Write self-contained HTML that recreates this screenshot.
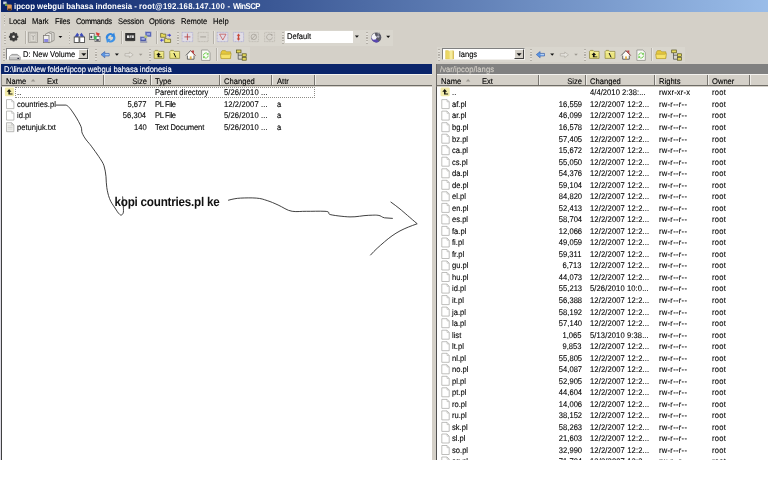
<!DOCTYPE html>
<html lang="id">
<head>
<meta charset="utf-8">
<title>ipcop webgui bahasa indonesia - WinSCP</title>
<style>
html,body{margin:0;padding:0;background:#fff;}
body{width:768px;height:477px;overflow:hidden;position:relative;font-family:"Liberation Sans",sans-serif;}
#app{filter:blur(.3px);position:absolute;left:0;top:0;width:768px;height:460px;overflow:hidden;background:#d4d0c8;}
#app div,#app svg{position:absolute;}
.t{position:absolute;white-space:pre;text-rendering:geometricPrecision;-webkit-text-stroke:.1px;}
#title{left:1px;top:0;width:767px;height:11.6px;background:linear-gradient(90deg,#0a246a 0%,#0a246a 2%,#a0c3ee 104%);}
.lb{left:0;top:0;width:1px;height:460px;background:#dcdae4;}
.pathL{left:1px;top:64px;width:430.7px;height:10.3px;background:#0a246a;}
.pathR{left:435.8px;top:64px;width:333px;height:10.3px;background:#808080;}
.paneL{left:1.1px;top:86.6px;width:430.5px;height:374px;background:#fff;border-left:1.1px solid #404040;box-sizing:border-box;}
.paneR{left:435.8px;top:86.6px;width:333px;height:374px;background:#fff;border-left:1.2px solid #505050;box-sizing:border-box;}
.hdr{height:12.4px;top:74.1px;background:#d4d0c8;border-bottom:1.1px solid #6e6c66;border-top:.8px solid #f4f2ee;box-sizing:border-box;}
.hs{top:75px;width:1px;height:10.4px;background:#77746e;box-shadow:.9px 0 0 #f2f0ec;}
.split{left:431.7px;top:63px;width:4.1px;height:400px;background:#d4d0c8;}
.combo{background:#fff;box-sizing:border-box;border:1px solid #808080;border-right-color:#f0eeea;border-bottom-color:#f0eeea;}
.cbtn{background:#d4d0c8;box-sizing:border-box;border:.8px solid #fff;border-right-color:#404040;border-bottom-color:#404040;}
.grip{width:1.6px;background:repeating-linear-gradient(180deg,#b4b0a8 0,#b4b0a8 .8px,#e2dfd9 .8px,#e2dfd9 1.6px);}
.sep{width:.9px;background:#b6b2aa;box-shadow:.8px 0 0 #eceae5;}
.band{background:#d9d6ce;}
.focus{left:15.4px;top:87.3px;width:299.2px;height:11.2px;box-sizing:border-box;border:1px dotted #8e8c86;}
</style>
</head>
<body>
<div id="app">
<div class="lb"></div>
<div id="title"></div>

<!-- toolbar bands -->
<div class="band" style="left:2px;top:29.6px;width:390.5px;height:16.4px"></div>
<div class="band" style="left:2px;top:46.8px;width:248px;height:15.6px"></div>
<div class="band" style="left:437px;top:46.8px;width:248px;height:15.6px"></div>

<!-- grips and separators: toolbar 1 -->
<div class="grip" style="left:3.6px;top:14.6px;height:11.5px"></div>
<div class="grip" style="left:4px;top:32px;height:11.5px"></div>
<div class="sep" style="left:24.6px;top:31.4px;height:12.6px"></div>
<div class="grip" style="left:68.6px;top:32px;height:11.5px"></div>
<div class="sep" style="left:120.8px;top:31.4px;height:12.6px"></div>
<div class="sep" style="left:156.2px;top:31.4px;height:12.6px"></div>
<div class="grip" style="left:177.4px;top:32px;height:11.5px"></div>
<div class="sep" style="left:213.2px;top:31.4px;height:12.6px"></div>
<div class="grip" style="left:282.4px;top:32px;height:11.5px"></div>
<div class="grip" style="left:366.4px;top:32px;height:11.5px"></div>
<!-- toolbar 2 left -->
<div class="grip" style="left:3.2px;top:49px;height:11.5px"></div>
<div class="grip" style="left:95.4px;top:49px;height:11.5px"></div>
<div class="grip" style="left:149.2px;top:49px;height:11.5px"></div>
<div class="sep" style="left:216.2px;top:48.4px;height:12.6px"></div>
<!-- toolbar 2 right -->
<div class="grip" style="left:438.4px;top:49px;height:11.5px"></div>
<div class="grip" style="left:530.2px;top:49px;height:11.5px"></div>
<div class="grip" style="left:584.2px;top:49px;height:11.5px"></div>
<div class="sep" style="left:651px;top:48.4px;height:12.6px"></div>

<!-- combos -->
<div class="combo" style="left:6.4px;top:48.4px;width:82.8px;height:12px"></div>
<div class="cbtn" style="left:78.4px;top:49.4px;width:9.8px;height:10px"></div>
<div class="combo" style="left:441.6px;top:48.2px;width:83px;height:12.2px"></div>
<div class="cbtn" style="left:513.8px;top:49.2px;width:9.8px;height:10.2px"></div>
<div style="left:285.2px;top:31px;width:68px;height:11.8px;background:#fff"></div>
<div style="left:353.2px;top:31px;width:7.2px;height:11.8px;background:#dbd8d1"></div>

<!-- panes -->
<div class="pathL"></div>
<div class="pathR"></div>
<div class="hdr" style="left:1px;width:430.7px"></div>
<div class="hdr" style="left:435.8px;width:333px"></div>
<div class="paneL"></div>
<div class="paneR"></div>
<div class="split"></div>
<div style="left:435.8px;top:63.8px;width:1.2px;height:23px;background:#6c6a66"></div>
<div style="left:1.1px;top:74.3px;width:1px;height:13px;background:#8a8882"></div>
<!-- header separators -->
<div class="hs" style="left:102.6px"></div>
<div class="hs" style="left:149.6px"></div>
<div class="hs" style="left:218.8px"></div>
<div class="hs" style="left:271.2px"></div>
<div class="hs" style="left:314px"></div>
<div class="hs" style="left:538.2px"></div>
<div class="hs" style="left:584.6px"></div>
<div class="hs" style="left:654.2px"></div>
<div class="hs" style="left:707.4px"></div>
<div class="hs" style="left:749px"></div>
<div class="focus"></div>

<svg style="left:0;top:0" width="768" height="459.5" viewBox="0 0 768 459.5" fill="none">
<g><rect x="3.2" y="1.6" width="3.4" height="2.6" fill="#c8d0d8"/><rect x="5" y="3.6" width="2.6" height="2.4" fill="#6a9a4a"/><rect x="7.2" y="4.6" width="4.6" height="5.6" rx=".8" fill="#e09a5a"/><rect x="7.8" y="8.6" width="3.6" height="2" fill="#4a3020"/></g>
<g transform="translate(13.6 36.8)"><circle r="2.8" stroke="#3c3c3c" stroke-width="2.2"/><g stroke="#3c3c3c" stroke-width="1.9"><path d="M0-4.7V4.7M-4.7 0H4.7M-3.3-3.3L3.3 3.3M-3.3 3.3L3.3-3.3"/></g><circle r="1.3" fill="#e4e2dc"/></g>
<rect x="28.6" y="32.2" width="8.8" height="10.2" fill="#dad7d0" stroke="#a09d96" stroke-width=".8"/><rect x="30" y="33.2" width="6" height="8.2" stroke="#b4b1aa" stroke-width=".6"/><path d="M31.8 35.2l1.4 1.8 1.4-1.8M33.2 37v3" stroke="#9a9892" stroke-width=".7"/>
<path d="M47.5 33l3-1.2 3.6 1v7.6l-3 1.4z" fill="#e4e2dc" stroke="#8a8882" stroke-width=".8"/><path d="M45.4 34l3-1.2 3.4 1v7.8l-3 1.3z" fill="#eceae6" stroke="#86847e" stroke-width=".8"/><rect x="43.4" y="35.4" width="5.6" height="7.2" fill="#f2f0ee" stroke="#7c7a76" stroke-width=".8"/><rect x="44.2" y="39" width="4" height="3" fill="#8a86e0"/>
<path d="M58.50 35.95h3.80l-1.90 2.10z" fill="#111"/>
<path d="M74.600 36.800l2.600-4 2.200 2.400 2.200-2.400 2.600 4z" fill="#3c4cba"/><path d="M77.800 36.600l1.600-1.800 1.600 1.800z" fill="#e6eaf6"/><rect x="74.200" y="37" width="4.800" height="5.400" fill="#fff" stroke="#3a3a3a" stroke-width=".8"/><rect x="79.800" y="37" width="4.800" height="5.400" fill="#fff" stroke="#3a3a3a" stroke-width=".8"/>
<rect x="89.4" y="33.6" width="4.8" height="6" fill="#f4f4f4" stroke="#666" stroke-width=".8"/><rect x="95" y="36.4" width="5" height="5.2" fill="#f4f4f4" stroke="#666" stroke-width=".8"/><rect x="90.4" y="35.8" width="1.8" height="2.4" fill="#445"/><rect x="96.2" y="39" width="2.6" height="2" fill="#556"/><path d="M93.6 35.6l3.2 1.2-.4 3-2.2-.6z" fill="#3cba5a"/><path d="M95.8 32.2l4 1.4-1.2 2.6-2-1.2z" fill="#dc3a34"/>
<g transform="translate(110.6 37.8)"><path d="M-4.6 1.2A4.6 4.6 0 0 1 2.4-3.9L3.6-5.2 4.6-.6 0-1.2 1.2-2.6A2.8 2.8 0 0 0-2.4.8z" fill="#2f86e0"/><path d="M4.6-1.2A4.6 4.6 0 0 1-2.4 3.9L-3.6 5.2-4.6.6 0 1.2-1.2 2.6A2.8 2.8 0 0 0 2.4-.8z" fill="#3f92e6"/></g>
<rect x="125.2" y="33" width="10" height="7.9" fill="#343434"/><rect x="127" y="35.4" width="2.4" height="2.6" fill="#e8e8e8"/><rect x="130" y="35.2" width="1" height="3" fill="#d0d0d0" transform="rotate(20 130.5 36.7)"/><rect x="131.6" y="35.4" width="2.2" height="2.6" fill="#dcdcdc"/><rect x="126" y="41.4" width="8" height=".6" fill="#b8b4ac"/>
<rect x="145.6" y="32" width="5.4" height="4.6" fill="#4858b0" stroke="#7880c0" stroke-width=".7"/><rect x="146.6" y="33" width="3.4" height="2.4" fill="#9aa6e0"/><rect x="140.4" y="37" width="5.6" height="4" fill="#3c4ca4" stroke="#7078b8" stroke-width=".7"/><rect x="141.4" y="37.8" width="3.4" height="2" fill="#aab4e6"/><rect x="140.2" y="41.4" width="7" height="1.3" fill="#8c90b0"/><path d="M143.6 37l2-2.2 2.2 1.8-2 2z" fill="#b8c47a"/>
<path d="M160.6 33.4h2l.6.7h2.6v3.2h-5.2z" fill="#e6da5c" stroke="#5e5a24" stroke-width=".7"/><path d="M164.6 38.4h2l.6.7h3.4v3.4h-6z" fill="#ece270" stroke="#5e5a24" stroke-width=".7"/><path d="M167.4 34.6h1.8v-1.2l2 1.8-2 1.8v-1.2h-1.8z" fill="#4444cc"/><path d="M163.6 39.6h-1.6v-1.2l-2 1.8 2 1.8v-1.2h1.6z" fill="#5050d0"/>
<rect x="182.1" y="32.4" width="10.6" height="9.2" fill="#e0dde6" stroke="#9c9cd0" stroke-width=".6" stroke-dasharray="1 .5"/><path d="M184.4 36.9h6M187.4 33.6v6.6" stroke="#b83c3c" stroke-width=".8"/>
<rect x="198.1" y="32.4" width="10" height="9.2" fill="#d8d5ce" stroke="#b4b0a8" stroke-width=".7" stroke-dasharray="1 .6"/><path d="M200.2 36.9h5.8" stroke="#aaa69e" stroke-width="1.1"/>
<rect x="217.2" y="32.4" width="10.6" height="9.2" fill="#e0dde6" stroke="#9c9cd0" stroke-width=".6" stroke-dasharray="1 .5"/><path d="M219.6 34.2h6.4l-3.2 5.8z" stroke="#c04848" stroke-width=".7"/>
<rect x="233.4" y="32.4" width="10.2" height="9.2" fill="#e0dde6" stroke="#9c9cd0" stroke-width=".6" stroke-dasharray="1 .5"/><path d="M238.5 33.4l1.8 2.4h-1.1v2.6h1.1l-1.8 2.4-1.8-2.4h1.1v-2.6h-1.1z" fill="#c84838"/>
<rect x="249.1" y="32.4" width="9.4" height="9.2" fill="#d8d5ce" stroke="#b8b4ac" stroke-width=".7" stroke-dasharray="1 .6"/><circle cx="253.8" cy="36.9" r="2.7" stroke="#a09c94" stroke-width=".7"/><path d="M251.6 39.4l4.4-5" stroke="#a09c94" stroke-width=".7"/>
<rect x="264.6" y="32.4" width="10" height="9.2" fill="#d8d5ce" stroke="#b8b4ac" stroke-width=".7" stroke-dasharray="1 .6"/><path d="M271.6 35a2.9 2.9 0 1 0 .8 2.4" stroke="#a09c94" stroke-width=".7"/><path d="M270.2 34.2h2.2v2z" fill="#a09c94"/>
<path d="M354.90 35.50h4.00l-2.00 2.20z" fill="#111"/>
<circle cx="376.3" cy="37.4" r="5" fill="#5a5a66"/><path d="M371.6 36.2a5 5 0 0 0 7.6 5.4c-2.2-2-4.2-4-7.6-5.4z" fill="#5846b0"/><path d="M371.4 37.6c.2-2.4 1.6-4 3.4-4.4l.6 2.6 1.6 1.2-1.4 2.4-2.6.4z" fill="#f4f4f8"/><path d="M377 33.400l3-1-1.600 3z" fill="#8a8a94"/><circle cx="378.200" cy="36.600" r="1.200" fill="#b4b4c4"/>
<path d="M386.20 35.70h4.00l-2.00 2.20z" fill="#111"/>
<g transform="translate(0.0 0)"><path d="M9.400 59.800v-3l2.400-2.400h5.400l3 2.400v3z" fill="#c6c6c6" stroke="#808080" stroke-width=".7"/><path d="M9.800 56.600h10" stroke="#f4f4f4" stroke-width=".7"/><rect x="17.400" y="57.800" width="1.600" height="1.200" fill="#334"/><path d="M101 54.600l3.800-3v1.800h4.400v2.600h-4.400v1.800z" fill="#5a96e4" stroke="#3a5ca4" stroke-width=".6"/><rect x="105.2" y="54" width="3.600" height="1.300" fill="#b4d0f4"/><path d="M114.900 53.600h4l-2 2.200z" fill="#111"/><path d="M133.200 54.800l-3.800-2.800v1.600h-4.400v2.400h4.400v1.600z" fill="#e4e2dc" stroke="#b0aca4" stroke-width=".7"/><path d="M138.900 53.700h3.600l-1.800 2z" fill="#9c9890"/><path d="M154.200 51.400l1-1h2.600l1 1h5v7h-9.600z" fill="#ece680" stroke="#807a30" stroke-width=".65"/><path d="M154.600 52.400h8.800" stroke="#f8f4b0" stroke-width=".6"/><path d="M158.600 52.600l2.200 2.400h-1.500v1.400h2.700v.9h-4.400v-2.300h-1.300z" fill="#111"/><path d="M169.800 51.400l1-1h2.600l1 1h5.200v7h-9.800z" fill="#ece680" stroke="#807a30" stroke-width=".65"/><path d="M170.200 52.400h9" stroke="#f8f4b0" stroke-width=".6"/><path d="M173.800 53l2 4.400" stroke="#111" stroke-width="1"/><path d="M187.400 55v4.200h6.600v-4.200" fill="#fbfbf6" stroke="#444" stroke-width=".8"/><path d="M186 55.400l4.600-4.800 4.600 4.800" fill="#fbfbf6" stroke="#444" stroke-width=".9"/><path d="M192 50.400h2v3.200l-2-2z" fill="#c04444"/><path d="M190.600 50.600l4.600 4.800" stroke="#b04848" stroke-width="1"/><rect x="189.800" y="56.400" width="1.800" height="2.800" fill="#e0b048"/><path d="M201.600 50h5.800l2.600 2.400v8h-8.400z" fill="#fafaf6" stroke="#8e8e88" stroke-width=".8"/><path d="M203.400 55.400a2.500 2.500 0 0 1 4.400-1.600M208.200 55.600a2.500 2.500 0 0 1-4.400 1.600" stroke="#6ccc4c" stroke-width=".9"/><path d="M208.600 52.600v2.200h-2.200zM203 58.400v-2.200h2.200z" fill="#6ccc4c"/><path d="M221 52.200l1.200-1.600h3.200l1 1.200h4.200v6.600h-9.600z" fill="#e6c83c" stroke="#a8922c" stroke-width=".6"/><path d="M220.400 54.200h9l1.800-.6-1 5h-9z" fill="#f6e268" stroke="#b49a30" stroke-width=".6"/><path d="M238.200 53v6.200h3.800M238.200 55.200h3.800" stroke="#444" stroke-width=".7"/><rect x="236.400" y="50" width="4.600" height="2.800" fill="#e4d85c" stroke="#55521e" stroke-width=".7"/><rect x="242.200" y="53.800" width="4" height="2.600" fill="#e4d85c" stroke="#55521e" stroke-width=".7"/><rect x="242.200" y="57.600" width="4" height="2.600" fill="#e4d85c" stroke="#55521e" stroke-width=".7"/><path d="M81.300 53.300h5l-2.500 2.600z" fill="#111"/></g>
<g transform="translate(435.3 0)"><path d="M101 54.600l3.800-3v1.800h4.400v2.600h-4.400v1.800z" fill="#5a96e4" stroke="#3a5ca4" stroke-width=".6"/><rect x="105.2" y="54" width="3.600" height="1.300" fill="#b4d0f4"/><path d="M114.900 53.600h4l-2 2.200z" fill="#111"/><path d="M133.200 54.800l-3.800-2.800v1.600h-4.400v2.400h4.400v1.600z" fill="#e4e2dc" stroke="#b0aca4" stroke-width=".7"/><path d="M138.900 53.700h3.600l-1.800 2z" fill="#9c9890"/><path d="M154.200 51.400l1-1h2.600l1 1h5v7h-9.600z" fill="#ece680" stroke="#807a30" stroke-width=".65"/><path d="M154.600 52.400h8.800" stroke="#f8f4b0" stroke-width=".6"/><path d="M158.600 52.600l2.200 2.400h-1.500v1.400h2.700v.9h-4.400v-2.300h-1.300z" fill="#111"/><path d="M169.800 51.400l1-1h2.600l1 1h5.200v7h-9.800z" fill="#ece680" stroke="#807a30" stroke-width=".65"/><path d="M170.200 52.400h9" stroke="#f8f4b0" stroke-width=".6"/><path d="M173.800 53l2 4.400" stroke="#111" stroke-width="1"/><path d="M187.400 55v4.200h6.600v-4.200" fill="#fbfbf6" stroke="#444" stroke-width=".8"/><path d="M186 55.400l4.600-4.800 4.600 4.800" fill="#fbfbf6" stroke="#444" stroke-width=".9"/><path d="M192 50.400h2v3.200l-2-2z" fill="#c04444"/><path d="M190.600 50.600l4.600 4.800" stroke="#b04848" stroke-width="1"/><rect x="189.800" y="56.400" width="1.800" height="2.800" fill="#e0b048"/><path d="M201.600 50h5.800l2.600 2.400v8h-8.400z" fill="#fafaf6" stroke="#8e8e88" stroke-width=".8"/><path d="M203.400 55.400a2.500 2.500 0 0 1 4.400-1.600M208.200 55.600a2.500 2.500 0 0 1-4.400 1.600" stroke="#6ccc4c" stroke-width=".9"/><path d="M208.600 52.600v2.200h-2.200zM203 58.400v-2.200h2.200z" fill="#6ccc4c"/><path d="M221 52.200l1.200-1.600h3.200l1 1.200h4.200v6.600h-9.600z" fill="#e6c83c" stroke="#a8922c" stroke-width=".6"/><path d="M220.400 54.200h9l1.800-.6-1 5h-9z" fill="#f6e268" stroke="#b49a30" stroke-width=".6"/><path d="M238.200 53v6.200h3.800M238.200 55.200h3.800" stroke="#444" stroke-width=".7"/><rect x="236.400" y="50" width="4.600" height="2.800" fill="#e4d85c" stroke="#55521e" stroke-width=".7"/><rect x="242.200" y="53.800" width="4" height="2.600" fill="#e4d85c" stroke="#55521e" stroke-width=".7"/><rect x="242.200" y="57.600" width="4" height="2.600" fill="#e4d85c" stroke="#55521e" stroke-width=".7"/><path d="M81.300 53.300h5l-2.500 2.600z" fill="#111"/></g>
<path d="M445.600 50.600h2.600l.8.800h4.400v7.600h-7.800z" fill="#ecd866" stroke="#d8c050" stroke-width=".5"/><path d="M449.600 50.400l3.600-.2v8.800h-3.600z" fill="#f6ec9c"/><path d="M453.200 50.600v8.400" stroke="#c8a838" stroke-width=".8"/>
<path d="M30.900 81.500l2.200-2.600 2.200 2.600z" fill="#99968f"/><path d="M465.900 81.500l2.200-2.600 2.200 2.600z" fill="#99968f"/>
<g transform="translate(4.9 87.6)"><rect x="0" y="0" width="9.200" height="8.600" rx="1.200" fill="#f3ecaa"/><path d="M4.200 1.400l2.400 2.800h-1.600v1.600h2.600v1.100h-4.100v-2.700h-1.700z" fill="#1a1a10"/></g>
<g transform="translate(6.1 99.2)"><path d="M.4.400h5.200l2.200 2.200v6.800h-7.400z" fill="#fff" stroke="#a4a4a0" stroke-width=".7"/><path d="M5.600.4v2.200h2.200" stroke="#a4a4a0" stroke-width=".5"/></g>
<g transform="translate(6.1 110.7)"><path d="M.4.400h5.200l2.200 2.200v6.800h-7.400z" fill="#fff" stroke="#a4a4a0" stroke-width=".7"/><path d="M5.600.4v2.200h2.200" stroke="#a4a4a0" stroke-width=".5"/></g>
<g transform="translate(6.1 122.3)"><path d="M.4.400h5.200l2.200 2.200v6.800h-7.400z" fill="#f1f1ef" stroke="#a4a4a0" stroke-width=".7"/><path d="M5.600.4v2.200h2.200" stroke="#a4a4a0" stroke-width=".5"/><path d="M1.600 3.600h4.800M1.600 5.200h4.800M1.600 6.800h4.800" stroke="#c4c4c0" stroke-width=".6"/></g>
<g transform="translate(440.5 87.6)"><rect x="0" y="0" width="9.200" height="8.600" rx="1.200" fill="#f3ecaa"/><path d="M4.200 1.400l2.400 2.800h-1.600v1.600h2.600v1.100h-4.100v-2.700h-1.700z" fill="#1a1a10"/></g>
<g transform="translate(441.4 99.2)"><path d="M.4.400h5.200l2.200 2.200v6.800h-7.400z" fill="#fff" stroke="#a4a4a0" stroke-width=".7"/><path d="M5.600.4v2.200h2.200" stroke="#a4a4a0" stroke-width=".5"/></g>
<g transform="translate(441.4 110.7)"><path d="M.4.400h5.200l2.200 2.200v6.800h-7.400z" fill="#fff" stroke="#a4a4a0" stroke-width=".7"/><path d="M5.600.4v2.200h2.200" stroke="#a4a4a0" stroke-width=".5"/></g>
<g transform="translate(441.4 122.3)"><path d="M.4.400h5.200l2.200 2.200v6.800h-7.400z" fill="#fff" stroke="#a4a4a0" stroke-width=".7"/><path d="M5.600.4v2.200h2.200" stroke="#a4a4a0" stroke-width=".5"/></g>
<g transform="translate(441.4 133.8)"><path d="M.4.400h5.200l2.200 2.200v6.800h-7.400z" fill="#fff" stroke="#a4a4a0" stroke-width=".7"/><path d="M5.600.4v2.200h2.200" stroke="#a4a4a0" stroke-width=".5"/></g>
<g transform="translate(441.4 145.3)"><path d="M.4.400h5.200l2.200 2.200v6.800h-7.400z" fill="#fff" stroke="#a4a4a0" stroke-width=".7"/><path d="M5.600.4v2.200h2.200" stroke="#a4a4a0" stroke-width=".5"/></g>
<g transform="translate(441.4 156.8)"><path d="M.4.400h5.200l2.200 2.200v6.800h-7.400z" fill="#fff" stroke="#a4a4a0" stroke-width=".7"/><path d="M5.600.4v2.200h2.200" stroke="#a4a4a0" stroke-width=".5"/></g>
<g transform="translate(441.4 168.4)"><path d="M.4.400h5.200l2.200 2.200v6.800h-7.400z" fill="#fff" stroke="#a4a4a0" stroke-width=".7"/><path d="M5.600.4v2.200h2.200" stroke="#a4a4a0" stroke-width=".5"/></g>
<g transform="translate(441.4 179.9)"><path d="M.4.400h5.200l2.200 2.200v6.800h-7.400z" fill="#fff" stroke="#a4a4a0" stroke-width=".7"/><path d="M5.600.4v2.200h2.200" stroke="#a4a4a0" stroke-width=".5"/></g>
<g transform="translate(441.4 191.4)"><path d="M.4.400h5.200l2.200 2.200v6.800h-7.400z" fill="#fff" stroke="#a4a4a0" stroke-width=".7"/><path d="M5.600.4v2.200h2.200" stroke="#a4a4a0" stroke-width=".5"/></g>
<g transform="translate(441.4 203.0)"><path d="M.4.400h5.200l2.200 2.200v6.800h-7.400z" fill="#fff" stroke="#a4a4a0" stroke-width=".7"/><path d="M5.600.4v2.200h2.200" stroke="#a4a4a0" stroke-width=".5"/></g>
<g transform="translate(441.4 214.5)"><path d="M.4.400h5.200l2.200 2.200v6.800h-7.400z" fill="#fff" stroke="#a4a4a0" stroke-width=".7"/><path d="M5.600.4v2.200h2.200" stroke="#a4a4a0" stroke-width=".5"/></g>
<g transform="translate(441.4 226.0)"><path d="M.4.400h5.200l2.200 2.200v6.800h-7.400z" fill="#fff" stroke="#a4a4a0" stroke-width=".7"/><path d="M5.600.4v2.200h2.200" stroke="#a4a4a0" stroke-width=".5"/></g>
<g transform="translate(441.4 237.6)"><path d="M.4.400h5.200l2.200 2.200v6.800h-7.400z" fill="#fff" stroke="#a4a4a0" stroke-width=".7"/><path d="M5.600.4v2.200h2.200" stroke="#a4a4a0" stroke-width=".5"/></g>
<g transform="translate(441.4 249.1)"><path d="M.4.400h5.200l2.200 2.200v6.800h-7.400z" fill="#fff" stroke="#a4a4a0" stroke-width=".7"/><path d="M5.600.4v2.200h2.200" stroke="#a4a4a0" stroke-width=".5"/></g>
<g transform="translate(441.4 260.6)"><path d="M.4.400h5.200l2.200 2.200v6.800h-7.400z" fill="#fff" stroke="#a4a4a0" stroke-width=".7"/><path d="M5.600.4v2.200h2.200" stroke="#a4a4a0" stroke-width=".5"/></g>
<g transform="translate(441.4 272.1)"><path d="M.4.400h5.200l2.200 2.200v6.800h-7.400z" fill="#fff" stroke="#a4a4a0" stroke-width=".7"/><path d="M5.600.4v2.200h2.200" stroke="#a4a4a0" stroke-width=".5"/></g>
<g transform="translate(441.4 283.7)"><path d="M.4.400h5.200l2.200 2.200v6.800h-7.400z" fill="#fff" stroke="#a4a4a0" stroke-width=".7"/><path d="M5.600.4v2.200h2.200" stroke="#a4a4a0" stroke-width=".5"/></g>
<g transform="translate(441.4 295.2)"><path d="M.4.400h5.200l2.200 2.200v6.800h-7.400z" fill="#fff" stroke="#a4a4a0" stroke-width=".7"/><path d="M5.600.4v2.200h2.200" stroke="#a4a4a0" stroke-width=".5"/></g>
<g transform="translate(441.4 306.7)"><path d="M.4.400h5.200l2.200 2.200v6.800h-7.400z" fill="#fff" stroke="#a4a4a0" stroke-width=".7"/><path d="M5.600.4v2.200h2.200" stroke="#a4a4a0" stroke-width=".5"/></g>
<g transform="translate(441.4 318.3)"><path d="M.4.400h5.200l2.200 2.200v6.800h-7.400z" fill="#fff" stroke="#a4a4a0" stroke-width=".7"/><path d="M5.600.4v2.200h2.200" stroke="#a4a4a0" stroke-width=".5"/></g>
<g transform="translate(441.4 329.8)"><path d="M.4.400h5.200l2.200 2.200v6.800h-7.400z" fill="#fff" stroke="#a4a4a0" stroke-width=".7"/><path d="M5.600.4v2.200h2.200" stroke="#a4a4a0" stroke-width=".5"/></g>
<g transform="translate(441.4 341.3)"><path d="M.4.400h5.200l2.200 2.200v6.800h-7.400z" fill="#fff" stroke="#a4a4a0" stroke-width=".7"/><path d="M5.600.4v2.200h2.200" stroke="#a4a4a0" stroke-width=".5"/></g>
<g transform="translate(441.4 352.9)"><path d="M.4.400h5.200l2.200 2.200v6.800h-7.400z" fill="#fff" stroke="#a4a4a0" stroke-width=".7"/><path d="M5.600.4v2.200h2.200" stroke="#a4a4a0" stroke-width=".5"/></g>
<g transform="translate(441.4 364.4)"><path d="M.4.400h5.200l2.200 2.200v6.800h-7.400z" fill="#fff" stroke="#a4a4a0" stroke-width=".7"/><path d="M5.600.4v2.200h2.200" stroke="#a4a4a0" stroke-width=".5"/></g>
<g transform="translate(441.4 375.9)"><path d="M.4.400h5.200l2.200 2.200v6.800h-7.400z" fill="#fff" stroke="#a4a4a0" stroke-width=".7"/><path d="M5.600.4v2.200h2.200" stroke="#a4a4a0" stroke-width=".5"/></g>
<g transform="translate(441.4 387.4)"><path d="M.4.400h5.200l2.200 2.200v6.800h-7.400z" fill="#fff" stroke="#a4a4a0" stroke-width=".7"/><path d="M5.600.4v2.200h2.200" stroke="#a4a4a0" stroke-width=".5"/></g>
<g transform="translate(441.4 399.0)"><path d="M.4.400h5.200l2.200 2.200v6.800h-7.400z" fill="#fff" stroke="#a4a4a0" stroke-width=".7"/><path d="M5.600.4v2.200h2.200" stroke="#a4a4a0" stroke-width=".5"/></g>
<g transform="translate(441.4 410.5)"><path d="M.4.400h5.200l2.200 2.200v6.800h-7.400z" fill="#fff" stroke="#a4a4a0" stroke-width=".7"/><path d="M5.600.4v2.200h2.200" stroke="#a4a4a0" stroke-width=".5"/></g>
<g transform="translate(441.4 422.0)"><path d="M.4.400h5.200l2.200 2.200v6.800h-7.400z" fill="#fff" stroke="#a4a4a0" stroke-width=".7"/><path d="M5.600.4v2.200h2.200" stroke="#a4a4a0" stroke-width=".5"/></g>
<g transform="translate(441.4 433.6)"><path d="M.4.400h5.200l2.200 2.200v6.800h-7.400z" fill="#fff" stroke="#a4a4a0" stroke-width=".7"/><path d="M5.600.4v2.200h2.200" stroke="#a4a4a0" stroke-width=".5"/></g>
<g transform="translate(441.4 445.1)"><path d="M.4.400h5.200l2.200 2.200v6.800h-7.400z" fill="#fff" stroke="#a4a4a0" stroke-width=".7"/><path d="M5.600.4v2.200h2.200" stroke="#a4a4a0" stroke-width=".5"/></g>
<g transform="translate(441.4 456.6)"><path d="M.4.400h5.200l2.200 2.200v6.800h-7.400z" fill="#fff" stroke="#a4a4a0" stroke-width=".7"/><path d="M5.600.4v2.200h2.200" stroke="#a4a4a0" stroke-width=".5"/></g>
<path d="M55.800 105.100H65.900C68 105.600 70 108 74 114S79.600 123.500 80.900 126.300 81.200 131 82.200 133.100 84 137 86.300 140 89.500 143.500 91.800 146.800 96.500 153 98.600 156.300 103 162.500 104 165.800 105.700 173 106 176.700 106.200 184 106.800 187.600 108 194.500 109.500 198.500 113 205 115 208 118 213 119.600 214.300 121 215.200 121.700 214.900 123.200 213.600 123.400 212.200 123.300 206 123.100 202.600L122.600 196.400" stroke="#2a2a2a" stroke-width=".9"/>
<path d="M228.100 200.300C232 199.200 236 198.300 240.600 198.100S251 197.700 256.300 198.100 263 199.300 267.200 200.600 273.500 203 278.100 205 287 210.600 292.200 211.300 301 211.200 306.300 211.300 319 211 325 211.300 327.500 213.600 329.700 214.400 343 216.700 350 216.900 362 215.500 368.800 215.300 375 215 378.100 215.300 381.500 217.200 384.400 217.800L392.800 218.400" stroke="#2a2a2a" stroke-width=".9"/>
<path d="M390.600 201.900C393.500 204 397 206.500 400 209S411 218.500 417.200 223.750C411 226 405.500 228 400 230.900S389.500 237.500 384.400 241.900 375 250 370.300 255.300" stroke="#2a2a2a" stroke-width=".9"/>
</svg>

<span class="t" style="top:1.08px;font-size:8.42px;line-height:11px;letter-spacing:0.036px;left:14.00px;transform-origin:0 50%;transform:scaleX(0.9259);font-weight:700;-webkit-text-stroke:0;color:#fff;">ipcop webgui bahasa indonesia - </span>
<span class="t" style="top:1.08px;font-size:8.42px;line-height:11px;letter-spacing:0.261px;left:139.40px;transform-origin:0 50%;transform:scaleX(0.9259);font-weight:700;-webkit-text-stroke:0;color:#fff;">root@192.168.147.100 - </span>
<span class="t" style="top:1.08px;font-size:8.42px;line-height:11px;letter-spacing:-0.588px;left:233.20px;transform-origin:0 50%;transform:scaleX(0.9259);font-weight:700;-webkit-text-stroke:0;color:#fff;">WinSCP</span>
<span class="t" style="top:15.66px;font-size:8.21px;line-height:11px;letter-spacing:-0.207px;left:8.70px;transform-origin:0 50%;transform:scaleX(0.9259);">Local</span>
<span class="t" style="top:15.66px;font-size:8.21px;line-height:11px;letter-spacing:-0.074px;left:31.90px;transform-origin:0 50%;transform:scaleX(0.9259);">Mark</span>
<span class="t" style="top:15.66px;font-size:8.21px;line-height:11px;letter-spacing:-0.226px;left:54.50px;transform-origin:0 50%;transform:scaleX(0.9259);">Files</span>
<span class="t" style="top:15.66px;font-size:8.21px;line-height:11px;letter-spacing:-0.436px;left:75.80px;transform-origin:0 50%;transform:scaleX(0.9259);">Commands</span>
<span class="t" style="top:15.66px;font-size:8.21px;line-height:11px;letter-spacing:-0.205px;left:117.50px;transform-origin:0 50%;transform:scaleX(0.9259);">Session</span>
<span class="t" style="top:15.66px;font-size:8.21px;line-height:11px;letter-spacing:-0.073px;left:149.00px;transform-origin:0 50%;transform:scaleX(0.9259);">Options</span>
<span class="t" style="top:15.66px;font-size:8.21px;line-height:11px;letter-spacing:-0.071px;left:180.50px;transform-origin:0 50%;transform:scaleX(0.9259);">Remote</span>
<span class="t" style="top:15.66px;font-size:8.21px;line-height:11px;letter-spacing:0.020px;left:212.50px;transform-origin:0 50%;transform:scaleX(0.9259);">Help</span>
<span class="t" style="top:49.46px;font-size:8.21px;line-height:11px;left:23.30px;transform-origin:0 50%;transform:scaleX(0.9259);">D: New Volume</span>
<span class="t" style="top:30.96px;font-size:8.21px;line-height:11px;left:286.50px;transform-origin:0 50%;transform:scaleX(0.9259);">Default</span>
<span class="t" style="top:49.46px;font-size:8.21px;line-height:11px;left:458.70px;transform-origin:0 50%;transform:scaleX(0.9259);">langs</span>
<span class="t" style="top:63.96px;font-size:8.21px;line-height:11px;letter-spacing:-0.095px;left:4.20px;transform-origin:0 50%;transform:scaleX(0.9259);color:#fff;">D:\linux\New folder\ipcop webgui bahasa indonesia</span>
<span class="t" style="top:63.96px;font-size:8.21px;line-height:11px;letter-spacing:0.055px;left:440.00px;transform-origin:0 50%;transform:scaleX(0.9259);color:#d4d0c8;">/var/ipcop/langs</span>
<span class="t" style="top:75.96px;font-size:8.21px;line-height:11px;left:5.50px;transform-origin:0 50%;transform:scaleX(0.9259);">Name</span>
<span class="t" style="top:75.96px;font-size:8.21px;line-height:11px;left:46.50px;transform-origin:0 50%;transform:scaleX(0.9259);">Ext</span>
<span class="t" style="top:75.96px;font-size:8.21px;line-height:11px;right:621.50px;transform-origin:100% 50%;transform:scaleX(0.9259);">Size</span>
<span class="t" style="top:75.96px;font-size:8.21px;line-height:11px;left:154.90px;transform-origin:0 50%;transform:scaleX(0.9259);">Type</span>
<span class="t" style="top:75.96px;font-size:8.21px;line-height:11px;left:223.50px;transform-origin:0 50%;transform:scaleX(0.9259);">Changed</span>
<span class="t" style="top:75.96px;font-size:8.21px;line-height:11px;left:276.70px;transform-origin:0 50%;transform:scaleX(0.9259);">Attr</span>
<span class="t" style="top:75.96px;font-size:8.21px;line-height:11px;left:441.30px;transform-origin:0 50%;transform:scaleX(0.9259);">Name</span>
<span class="t" style="top:75.96px;font-size:8.21px;line-height:11px;left:482.00px;transform-origin:0 50%;transform:scaleX(0.9259);">Ext</span>
<span class="t" style="top:75.96px;font-size:8.21px;line-height:11px;right:186.50px;transform-origin:100% 50%;transform:scaleX(0.9259);">Size</span>
<span class="t" style="top:75.96px;font-size:8.21px;line-height:11px;left:590.00px;transform-origin:0 50%;transform:scaleX(0.9259);">Changed</span>
<span class="t" style="top:75.96px;font-size:8.21px;line-height:11px;left:658.80px;transform-origin:0 50%;transform:scaleX(0.9259);">Rights</span>
<span class="t" style="top:75.96px;font-size:8.21px;line-height:11px;left:712.20px;transform-origin:0 50%;transform:scaleX(0.9259);">Owner</span>
<span class="t" style="top:87.43px;font-size:8.21px;line-height:11px;letter-spacing:0.197px;left:16.60px;transform-origin:0 50%;transform:scaleX(0.9259);">..</span>
<span class="t" style="top:87.43px;font-size:8.21px;line-height:11px;letter-spacing:-0.028px;left:154.90px;transform-origin:0 50%;transform:scaleX(0.9259);">Parent directory</span>
<span class="t" style="top:87.43px;font-size:8.21px;line-height:11px;letter-spacing:0.113px;left:223.50px;transform-origin:0 50%;transform:scaleX(0.9259);">5/26/2010 ...</span>
<span class="t" style="top:98.96px;font-size:8.21px;line-height:11px;left:16.60px;transform-origin:0 50%;transform:scaleX(0.9259);">countries.pl</span>
<span class="t" style="top:98.96px;font-size:8.21px;line-height:11px;right:621.50px;transform-origin:100% 50%;transform:scaleX(0.9259);">5,677</span>
<span class="t" style="top:98.96px;font-size:8.21px;line-height:11px;letter-spacing:-0.426px;left:154.90px;transform-origin:0 50%;transform:scaleX(0.9259);">PL File</span>
<span class="t" style="top:98.96px;font-size:8.21px;line-height:11px;letter-spacing:0.113px;left:223.50px;transform-origin:0 50%;transform:scaleX(0.9259);">12/2/2007 ...</span>
<span class="t" style="top:98.96px;font-size:8.21px;line-height:11px;left:276.70px;transform-origin:0 50%;transform:scaleX(0.9259);">a</span>
<span class="t" style="top:110.49px;font-size:8.21px;line-height:11px;left:16.60px;transform-origin:0 50%;transform:scaleX(0.9259);">id.pl</span>
<span class="t" style="top:110.49px;font-size:8.21px;line-height:11px;right:621.50px;transform-origin:100% 50%;transform:scaleX(0.9259);">56,304</span>
<span class="t" style="top:110.49px;font-size:8.21px;line-height:11px;letter-spacing:-0.426px;left:154.90px;transform-origin:0 50%;transform:scaleX(0.9259);">PL File</span>
<span class="t" style="top:110.49px;font-size:8.21px;line-height:11px;letter-spacing:0.113px;left:223.50px;transform-origin:0 50%;transform:scaleX(0.9259);">5/26/2010 ...</span>
<span class="t" style="top:110.49px;font-size:8.21px;line-height:11px;left:276.70px;transform-origin:0 50%;transform:scaleX(0.9259);">a</span>
<span class="t" style="top:122.02px;font-size:8.21px;line-height:11px;left:16.60px;transform-origin:0 50%;transform:scaleX(0.9259);">petunjuk.txt</span>
<span class="t" style="top:122.02px;font-size:8.21px;line-height:11px;right:621.50px;transform-origin:100% 50%;transform:scaleX(0.9259);">140</span>
<span class="t" style="top:122.02px;font-size:8.21px;line-height:11px;letter-spacing:-0.121px;left:154.90px;transform-origin:0 50%;transform:scaleX(0.9259);">Text Document</span>
<span class="t" style="top:122.02px;font-size:8.21px;line-height:11px;letter-spacing:0.113px;left:223.50px;transform-origin:0 50%;transform:scaleX(0.9259);">5/26/2010 ...</span>
<span class="t" style="top:122.02px;font-size:8.21px;line-height:11px;left:276.70px;transform-origin:0 50%;transform:scaleX(0.9259);">a</span>
<span class="t" style="top:87.43px;font-size:8.21px;line-height:11px;letter-spacing:0.197px;left:451.80px;transform-origin:0 50%;transform:scaleX(0.9259);">..</span>
<span class="t" style="top:87.43px;font-size:8.21px;line-height:11px;letter-spacing:0.045px;left:590.00px;transform-origin:0 50%;transform:scaleX(0.9259);">4/4/2010 2:38:...</span>
<span class="t" style="top:87.43px;font-size:8.21px;line-height:11px;letter-spacing:0.212px;left:658.60px;transform-origin:0 50%;transform:scaleX(0.9259);">rwxr-xr-x</span>
<span class="t" style="top:87.43px;font-size:8.21px;line-height:11px;letter-spacing:0.272px;left:712.20px;transform-origin:0 50%;transform:scaleX(0.9259);">root</span>
<span class="t" style="top:98.96px;font-size:8.21px;line-height:11px;left:451.80px;transform-origin:0 50%;transform:scaleX(0.9259);">af.pl</span>
<span class="t" style="top:98.96px;font-size:8.21px;line-height:11px;right:186.40px;transform-origin:100% 50%;transform:scaleX(0.9259);">16,559</span>
<span class="t" style="top:98.96px;font-size:8.21px;line-height:11px;letter-spacing:0.139px;left:590.00px;transform-origin:0 50%;transform:scaleX(0.9259);">12/2/2007 12:2...</span>
<span class="t" style="top:98.96px;font-size:8.21px;line-height:11px;letter-spacing:0.298px;left:658.60px;transform-origin:0 50%;transform:scaleX(0.9259);">rw-r--r--</span>
<span class="t" style="top:98.96px;font-size:8.21px;line-height:11px;letter-spacing:0.272px;left:712.20px;transform-origin:0 50%;transform:scaleX(0.9259);">root</span>
<span class="t" style="top:110.49px;font-size:8.21px;line-height:11px;left:451.80px;transform-origin:0 50%;transform:scaleX(0.9259);">ar.pl</span>
<span class="t" style="top:110.49px;font-size:8.21px;line-height:11px;right:186.40px;transform-origin:100% 50%;transform:scaleX(0.9259);">46,099</span>
<span class="t" style="top:110.49px;font-size:8.21px;line-height:11px;letter-spacing:0.139px;left:590.00px;transform-origin:0 50%;transform:scaleX(0.9259);">12/2/2007 12:2...</span>
<span class="t" style="top:110.49px;font-size:8.21px;line-height:11px;letter-spacing:0.298px;left:658.60px;transform-origin:0 50%;transform:scaleX(0.9259);">rw-r--r--</span>
<span class="t" style="top:110.49px;font-size:8.21px;line-height:11px;letter-spacing:0.272px;left:712.20px;transform-origin:0 50%;transform:scaleX(0.9259);">root</span>
<span class="t" style="top:122.02px;font-size:8.21px;line-height:11px;left:451.80px;transform-origin:0 50%;transform:scaleX(0.9259);">bg.pl</span>
<span class="t" style="top:122.02px;font-size:8.21px;line-height:11px;right:186.40px;transform-origin:100% 50%;transform:scaleX(0.9259);">16,578</span>
<span class="t" style="top:122.02px;font-size:8.21px;line-height:11px;letter-spacing:0.139px;left:590.00px;transform-origin:0 50%;transform:scaleX(0.9259);">12/2/2007 12:2...</span>
<span class="t" style="top:122.02px;font-size:8.21px;line-height:11px;letter-spacing:0.298px;left:658.60px;transform-origin:0 50%;transform:scaleX(0.9259);">rw-r--r--</span>
<span class="t" style="top:122.02px;font-size:8.21px;line-height:11px;letter-spacing:0.272px;left:712.20px;transform-origin:0 50%;transform:scaleX(0.9259);">root</span>
<span class="t" style="top:133.55px;font-size:8.21px;line-height:11px;left:451.80px;transform-origin:0 50%;transform:scaleX(0.9259);">bz.pl</span>
<span class="t" style="top:133.55px;font-size:8.21px;line-height:11px;right:186.40px;transform-origin:100% 50%;transform:scaleX(0.9259);">57,405</span>
<span class="t" style="top:133.55px;font-size:8.21px;line-height:11px;letter-spacing:0.139px;left:590.00px;transform-origin:0 50%;transform:scaleX(0.9259);">12/2/2007 12:2...</span>
<span class="t" style="top:133.55px;font-size:8.21px;line-height:11px;letter-spacing:0.298px;left:658.60px;transform-origin:0 50%;transform:scaleX(0.9259);">rw-r--r--</span>
<span class="t" style="top:133.55px;font-size:8.21px;line-height:11px;letter-spacing:0.272px;left:712.20px;transform-origin:0 50%;transform:scaleX(0.9259);">root</span>
<span class="t" style="top:145.08px;font-size:8.21px;line-height:11px;left:451.80px;transform-origin:0 50%;transform:scaleX(0.9259);">ca.pl</span>
<span class="t" style="top:145.08px;font-size:8.21px;line-height:11px;right:186.40px;transform-origin:100% 50%;transform:scaleX(0.9259);">15,672</span>
<span class="t" style="top:145.08px;font-size:8.21px;line-height:11px;letter-spacing:0.139px;left:590.00px;transform-origin:0 50%;transform:scaleX(0.9259);">12/2/2007 12:2...</span>
<span class="t" style="top:145.08px;font-size:8.21px;line-height:11px;letter-spacing:0.298px;left:658.60px;transform-origin:0 50%;transform:scaleX(0.9259);">rw-r--r--</span>
<span class="t" style="top:145.08px;font-size:8.21px;line-height:11px;letter-spacing:0.272px;left:712.20px;transform-origin:0 50%;transform:scaleX(0.9259);">root</span>
<span class="t" style="top:156.61px;font-size:8.21px;line-height:11px;left:451.80px;transform-origin:0 50%;transform:scaleX(0.9259);">cs.pl</span>
<span class="t" style="top:156.61px;font-size:8.21px;line-height:11px;right:186.40px;transform-origin:100% 50%;transform:scaleX(0.9259);">55,050</span>
<span class="t" style="top:156.61px;font-size:8.21px;line-height:11px;letter-spacing:0.139px;left:590.00px;transform-origin:0 50%;transform:scaleX(0.9259);">12/2/2007 12:2...</span>
<span class="t" style="top:156.61px;font-size:8.21px;line-height:11px;letter-spacing:0.298px;left:658.60px;transform-origin:0 50%;transform:scaleX(0.9259);">rw-r--r--</span>
<span class="t" style="top:156.61px;font-size:8.21px;line-height:11px;letter-spacing:0.272px;left:712.20px;transform-origin:0 50%;transform:scaleX(0.9259);">root</span>
<span class="t" style="top:168.14px;font-size:8.21px;line-height:11px;left:451.80px;transform-origin:0 50%;transform:scaleX(0.9259);">da.pl</span>
<span class="t" style="top:168.14px;font-size:8.21px;line-height:11px;right:186.40px;transform-origin:100% 50%;transform:scaleX(0.9259);">54,376</span>
<span class="t" style="top:168.14px;font-size:8.21px;line-height:11px;letter-spacing:0.139px;left:590.00px;transform-origin:0 50%;transform:scaleX(0.9259);">12/2/2007 12:2...</span>
<span class="t" style="top:168.14px;font-size:8.21px;line-height:11px;letter-spacing:0.298px;left:658.60px;transform-origin:0 50%;transform:scaleX(0.9259);">rw-r--r--</span>
<span class="t" style="top:168.14px;font-size:8.21px;line-height:11px;letter-spacing:0.272px;left:712.20px;transform-origin:0 50%;transform:scaleX(0.9259);">root</span>
<span class="t" style="top:179.67px;font-size:8.21px;line-height:11px;left:451.80px;transform-origin:0 50%;transform:scaleX(0.9259);">de.pl</span>
<span class="t" style="top:179.67px;font-size:8.21px;line-height:11px;right:186.40px;transform-origin:100% 50%;transform:scaleX(0.9259);">59,104</span>
<span class="t" style="top:179.67px;font-size:8.21px;line-height:11px;letter-spacing:0.139px;left:590.00px;transform-origin:0 50%;transform:scaleX(0.9259);">12/2/2007 12:2...</span>
<span class="t" style="top:179.67px;font-size:8.21px;line-height:11px;letter-spacing:0.298px;left:658.60px;transform-origin:0 50%;transform:scaleX(0.9259);">rw-r--r--</span>
<span class="t" style="top:179.67px;font-size:8.21px;line-height:11px;letter-spacing:0.272px;left:712.20px;transform-origin:0 50%;transform:scaleX(0.9259);">root</span>
<span class="t" style="top:191.20px;font-size:8.21px;line-height:11px;left:451.80px;transform-origin:0 50%;transform:scaleX(0.9259);">el.pl</span>
<span class="t" style="top:191.20px;font-size:8.21px;line-height:11px;right:186.40px;transform-origin:100% 50%;transform:scaleX(0.9259);">84,820</span>
<span class="t" style="top:191.20px;font-size:8.21px;line-height:11px;letter-spacing:0.139px;left:590.00px;transform-origin:0 50%;transform:scaleX(0.9259);">12/2/2007 12:2...</span>
<span class="t" style="top:191.20px;font-size:8.21px;line-height:11px;letter-spacing:0.298px;left:658.60px;transform-origin:0 50%;transform:scaleX(0.9259);">rw-r--r--</span>
<span class="t" style="top:191.20px;font-size:8.21px;line-height:11px;letter-spacing:0.272px;left:712.20px;transform-origin:0 50%;transform:scaleX(0.9259);">root</span>
<span class="t" style="top:202.73px;font-size:8.21px;line-height:11px;left:451.80px;transform-origin:0 50%;transform:scaleX(0.9259);">en.pl</span>
<span class="t" style="top:202.73px;font-size:8.21px;line-height:11px;right:186.40px;transform-origin:100% 50%;transform:scaleX(0.9259);">52,413</span>
<span class="t" style="top:202.73px;font-size:8.21px;line-height:11px;letter-spacing:0.139px;left:590.00px;transform-origin:0 50%;transform:scaleX(0.9259);">12/2/2007 12:2...</span>
<span class="t" style="top:202.73px;font-size:8.21px;line-height:11px;letter-spacing:0.298px;left:658.60px;transform-origin:0 50%;transform:scaleX(0.9259);">rw-r--r--</span>
<span class="t" style="top:202.73px;font-size:8.21px;line-height:11px;letter-spacing:0.272px;left:712.20px;transform-origin:0 50%;transform:scaleX(0.9259);">root</span>
<span class="t" style="top:214.26px;font-size:8.21px;line-height:11px;left:451.80px;transform-origin:0 50%;transform:scaleX(0.9259);">es.pl</span>
<span class="t" style="top:214.26px;font-size:8.21px;line-height:11px;right:186.40px;transform-origin:100% 50%;transform:scaleX(0.9259);">58,704</span>
<span class="t" style="top:214.26px;font-size:8.21px;line-height:11px;letter-spacing:0.139px;left:590.00px;transform-origin:0 50%;transform:scaleX(0.9259);">12/2/2007 12:2...</span>
<span class="t" style="top:214.26px;font-size:8.21px;line-height:11px;letter-spacing:0.298px;left:658.60px;transform-origin:0 50%;transform:scaleX(0.9259);">rw-r--r--</span>
<span class="t" style="top:214.26px;font-size:8.21px;line-height:11px;letter-spacing:0.272px;left:712.20px;transform-origin:0 50%;transform:scaleX(0.9259);">root</span>
<span class="t" style="top:225.79px;font-size:8.21px;line-height:11px;left:451.80px;transform-origin:0 50%;transform:scaleX(0.9259);">fa.pl</span>
<span class="t" style="top:225.79px;font-size:8.21px;line-height:11px;right:186.40px;transform-origin:100% 50%;transform:scaleX(0.9259);">12,066</span>
<span class="t" style="top:225.79px;font-size:8.21px;line-height:11px;letter-spacing:0.139px;left:590.00px;transform-origin:0 50%;transform:scaleX(0.9259);">12/2/2007 12:2...</span>
<span class="t" style="top:225.79px;font-size:8.21px;line-height:11px;letter-spacing:0.298px;left:658.60px;transform-origin:0 50%;transform:scaleX(0.9259);">rw-r--r--</span>
<span class="t" style="top:225.79px;font-size:8.21px;line-height:11px;letter-spacing:0.272px;left:712.20px;transform-origin:0 50%;transform:scaleX(0.9259);">root</span>
<span class="t" style="top:237.32px;font-size:8.21px;line-height:11px;left:451.80px;transform-origin:0 50%;transform:scaleX(0.9259);">fi.pl</span>
<span class="t" style="top:237.32px;font-size:8.21px;line-height:11px;right:186.40px;transform-origin:100% 50%;transform:scaleX(0.9259);">49,059</span>
<span class="t" style="top:237.32px;font-size:8.21px;line-height:11px;letter-spacing:0.139px;left:590.00px;transform-origin:0 50%;transform:scaleX(0.9259);">12/2/2007 12:2...</span>
<span class="t" style="top:237.32px;font-size:8.21px;line-height:11px;letter-spacing:0.298px;left:658.60px;transform-origin:0 50%;transform:scaleX(0.9259);">rw-r--r--</span>
<span class="t" style="top:237.32px;font-size:8.21px;line-height:11px;letter-spacing:0.272px;left:712.20px;transform-origin:0 50%;transform:scaleX(0.9259);">root</span>
<span class="t" style="top:248.85px;font-size:8.21px;line-height:11px;left:451.80px;transform-origin:0 50%;transform:scaleX(0.9259);">fr.pl</span>
<span class="t" style="top:248.85px;font-size:8.21px;line-height:11px;right:186.40px;transform-origin:100% 50%;transform:scaleX(0.9259);">59,311</span>
<span class="t" style="top:248.85px;font-size:8.21px;line-height:11px;letter-spacing:0.139px;left:590.00px;transform-origin:0 50%;transform:scaleX(0.9259);">12/2/2007 12:2...</span>
<span class="t" style="top:248.85px;font-size:8.21px;line-height:11px;letter-spacing:0.298px;left:658.60px;transform-origin:0 50%;transform:scaleX(0.9259);">rw-r--r--</span>
<span class="t" style="top:248.85px;font-size:8.21px;line-height:11px;letter-spacing:0.272px;left:712.20px;transform-origin:0 50%;transform:scaleX(0.9259);">root</span>
<span class="t" style="top:260.38px;font-size:8.21px;line-height:11px;left:451.80px;transform-origin:0 50%;transform:scaleX(0.9259);">gu.pl</span>
<span class="t" style="top:260.38px;font-size:8.21px;line-height:11px;right:186.40px;transform-origin:100% 50%;transform:scaleX(0.9259);">6,713</span>
<span class="t" style="top:260.38px;font-size:8.21px;line-height:11px;letter-spacing:0.139px;left:590.00px;transform-origin:0 50%;transform:scaleX(0.9259);">12/2/2007 12:2...</span>
<span class="t" style="top:260.38px;font-size:8.21px;line-height:11px;letter-spacing:0.298px;left:658.60px;transform-origin:0 50%;transform:scaleX(0.9259);">rw-r--r--</span>
<span class="t" style="top:260.38px;font-size:8.21px;line-height:11px;letter-spacing:0.272px;left:712.20px;transform-origin:0 50%;transform:scaleX(0.9259);">root</span>
<span class="t" style="top:271.91px;font-size:8.21px;line-height:11px;left:451.80px;transform-origin:0 50%;transform:scaleX(0.9259);">hu.pl</span>
<span class="t" style="top:271.91px;font-size:8.21px;line-height:11px;right:186.40px;transform-origin:100% 50%;transform:scaleX(0.9259);">44,073</span>
<span class="t" style="top:271.91px;font-size:8.21px;line-height:11px;letter-spacing:0.139px;left:590.00px;transform-origin:0 50%;transform:scaleX(0.9259);">12/2/2007 12:2...</span>
<span class="t" style="top:271.91px;font-size:8.21px;line-height:11px;letter-spacing:0.298px;left:658.60px;transform-origin:0 50%;transform:scaleX(0.9259);">rw-r--r--</span>
<span class="t" style="top:271.91px;font-size:8.21px;line-height:11px;letter-spacing:0.272px;left:712.20px;transform-origin:0 50%;transform:scaleX(0.9259);">root</span>
<span class="t" style="top:283.44px;font-size:8.21px;line-height:11px;left:451.80px;transform-origin:0 50%;transform:scaleX(0.9259);">id.pl</span>
<span class="t" style="top:283.44px;font-size:8.21px;line-height:11px;right:186.40px;transform-origin:100% 50%;transform:scaleX(0.9259);">55,213</span>
<span class="t" style="top:283.44px;font-size:8.21px;line-height:11px;letter-spacing:0.113px;left:590.00px;transform-origin:0 50%;transform:scaleX(0.9259);">5/26/2010 10:0...</span>
<span class="t" style="top:283.44px;font-size:8.21px;line-height:11px;letter-spacing:0.298px;left:658.60px;transform-origin:0 50%;transform:scaleX(0.9259);">rw-r--r--</span>
<span class="t" style="top:283.44px;font-size:8.21px;line-height:11px;letter-spacing:0.272px;left:712.20px;transform-origin:0 50%;transform:scaleX(0.9259);">root</span>
<span class="t" style="top:294.97px;font-size:8.21px;line-height:11px;left:451.80px;transform-origin:0 50%;transform:scaleX(0.9259);">it.pl</span>
<span class="t" style="top:294.97px;font-size:8.21px;line-height:11px;right:186.40px;transform-origin:100% 50%;transform:scaleX(0.9259);">56,388</span>
<span class="t" style="top:294.97px;font-size:8.21px;line-height:11px;letter-spacing:0.139px;left:590.00px;transform-origin:0 50%;transform:scaleX(0.9259);">12/2/2007 12:2...</span>
<span class="t" style="top:294.97px;font-size:8.21px;line-height:11px;letter-spacing:0.298px;left:658.60px;transform-origin:0 50%;transform:scaleX(0.9259);">rw-r--r--</span>
<span class="t" style="top:294.97px;font-size:8.21px;line-height:11px;letter-spacing:0.272px;left:712.20px;transform-origin:0 50%;transform:scaleX(0.9259);">root</span>
<span class="t" style="top:306.50px;font-size:8.21px;line-height:11px;left:451.80px;transform-origin:0 50%;transform:scaleX(0.9259);">ja.pl</span>
<span class="t" style="top:306.50px;font-size:8.21px;line-height:11px;right:186.40px;transform-origin:100% 50%;transform:scaleX(0.9259);">58,192</span>
<span class="t" style="top:306.50px;font-size:8.21px;line-height:11px;letter-spacing:0.139px;left:590.00px;transform-origin:0 50%;transform:scaleX(0.9259);">12/2/2007 12:2...</span>
<span class="t" style="top:306.50px;font-size:8.21px;line-height:11px;letter-spacing:0.298px;left:658.60px;transform-origin:0 50%;transform:scaleX(0.9259);">rw-r--r--</span>
<span class="t" style="top:306.50px;font-size:8.21px;line-height:11px;letter-spacing:0.272px;left:712.20px;transform-origin:0 50%;transform:scaleX(0.9259);">root</span>
<span class="t" style="top:318.03px;font-size:8.21px;line-height:11px;left:451.80px;transform-origin:0 50%;transform:scaleX(0.9259);">la.pl</span>
<span class="t" style="top:318.03px;font-size:8.21px;line-height:11px;right:186.40px;transform-origin:100% 50%;transform:scaleX(0.9259);">57,140</span>
<span class="t" style="top:318.03px;font-size:8.21px;line-height:11px;letter-spacing:0.139px;left:590.00px;transform-origin:0 50%;transform:scaleX(0.9259);">12/2/2007 12:2...</span>
<span class="t" style="top:318.03px;font-size:8.21px;line-height:11px;letter-spacing:0.298px;left:658.60px;transform-origin:0 50%;transform:scaleX(0.9259);">rw-r--r--</span>
<span class="t" style="top:318.03px;font-size:8.21px;line-height:11px;letter-spacing:0.272px;left:712.20px;transform-origin:0 50%;transform:scaleX(0.9259);">root</span>
<span class="t" style="top:329.56px;font-size:8.21px;line-height:11px;left:451.80px;transform-origin:0 50%;transform:scaleX(0.9259);">list</span>
<span class="t" style="top:329.56px;font-size:8.21px;line-height:11px;right:186.40px;transform-origin:100% 50%;transform:scaleX(0.9259);">1,065</span>
<span class="t" style="top:329.56px;font-size:8.21px;line-height:11px;letter-spacing:0.113px;left:590.00px;transform-origin:0 50%;transform:scaleX(0.9259);">5/13/2010 9:38...</span>
<span class="t" style="top:329.56px;font-size:8.21px;line-height:11px;letter-spacing:0.298px;left:658.60px;transform-origin:0 50%;transform:scaleX(0.9259);">rw-r--r--</span>
<span class="t" style="top:329.56px;font-size:8.21px;line-height:11px;letter-spacing:0.272px;left:712.20px;transform-origin:0 50%;transform:scaleX(0.9259);">root</span>
<span class="t" style="top:341.09px;font-size:8.21px;line-height:11px;left:451.80px;transform-origin:0 50%;transform:scaleX(0.9259);">lt.pl</span>
<span class="t" style="top:341.09px;font-size:8.21px;line-height:11px;right:186.40px;transform-origin:100% 50%;transform:scaleX(0.9259);">9,853</span>
<span class="t" style="top:341.09px;font-size:8.21px;line-height:11px;letter-spacing:0.139px;left:590.00px;transform-origin:0 50%;transform:scaleX(0.9259);">12/2/2007 12:2...</span>
<span class="t" style="top:341.09px;font-size:8.21px;line-height:11px;letter-spacing:0.298px;left:658.60px;transform-origin:0 50%;transform:scaleX(0.9259);">rw-r--r--</span>
<span class="t" style="top:341.09px;font-size:8.21px;line-height:11px;letter-spacing:0.272px;left:712.20px;transform-origin:0 50%;transform:scaleX(0.9259);">root</span>
<span class="t" style="top:352.62px;font-size:8.21px;line-height:11px;left:451.80px;transform-origin:0 50%;transform:scaleX(0.9259);">nl.pl</span>
<span class="t" style="top:352.62px;font-size:8.21px;line-height:11px;right:186.40px;transform-origin:100% 50%;transform:scaleX(0.9259);">55,805</span>
<span class="t" style="top:352.62px;font-size:8.21px;line-height:11px;letter-spacing:0.139px;left:590.00px;transform-origin:0 50%;transform:scaleX(0.9259);">12/2/2007 12:2...</span>
<span class="t" style="top:352.62px;font-size:8.21px;line-height:11px;letter-spacing:0.298px;left:658.60px;transform-origin:0 50%;transform:scaleX(0.9259);">rw-r--r--</span>
<span class="t" style="top:352.62px;font-size:8.21px;line-height:11px;letter-spacing:0.272px;left:712.20px;transform-origin:0 50%;transform:scaleX(0.9259);">root</span>
<span class="t" style="top:364.15px;font-size:8.21px;line-height:11px;left:451.80px;transform-origin:0 50%;transform:scaleX(0.9259);">no.pl</span>
<span class="t" style="top:364.15px;font-size:8.21px;line-height:11px;right:186.40px;transform-origin:100% 50%;transform:scaleX(0.9259);">54,087</span>
<span class="t" style="top:364.15px;font-size:8.21px;line-height:11px;letter-spacing:0.139px;left:590.00px;transform-origin:0 50%;transform:scaleX(0.9259);">12/2/2007 12:2...</span>
<span class="t" style="top:364.15px;font-size:8.21px;line-height:11px;letter-spacing:0.298px;left:658.60px;transform-origin:0 50%;transform:scaleX(0.9259);">rw-r--r--</span>
<span class="t" style="top:364.15px;font-size:8.21px;line-height:11px;letter-spacing:0.272px;left:712.20px;transform-origin:0 50%;transform:scaleX(0.9259);">root</span>
<span class="t" style="top:375.68px;font-size:8.21px;line-height:11px;left:451.80px;transform-origin:0 50%;transform:scaleX(0.9259);">pl.pl</span>
<span class="t" style="top:375.68px;font-size:8.21px;line-height:11px;right:186.40px;transform-origin:100% 50%;transform:scaleX(0.9259);">52,905</span>
<span class="t" style="top:375.68px;font-size:8.21px;line-height:11px;letter-spacing:0.139px;left:590.00px;transform-origin:0 50%;transform:scaleX(0.9259);">12/2/2007 12:2...</span>
<span class="t" style="top:375.68px;font-size:8.21px;line-height:11px;letter-spacing:0.298px;left:658.60px;transform-origin:0 50%;transform:scaleX(0.9259);">rw-r--r--</span>
<span class="t" style="top:375.68px;font-size:8.21px;line-height:11px;letter-spacing:0.272px;left:712.20px;transform-origin:0 50%;transform:scaleX(0.9259);">root</span>
<span class="t" style="top:387.21px;font-size:8.21px;line-height:11px;left:451.80px;transform-origin:0 50%;transform:scaleX(0.9259);">pt.pl</span>
<span class="t" style="top:387.21px;font-size:8.21px;line-height:11px;right:186.40px;transform-origin:100% 50%;transform:scaleX(0.9259);">44,604</span>
<span class="t" style="top:387.21px;font-size:8.21px;line-height:11px;letter-spacing:0.139px;left:590.00px;transform-origin:0 50%;transform:scaleX(0.9259);">12/2/2007 12:2...</span>
<span class="t" style="top:387.21px;font-size:8.21px;line-height:11px;letter-spacing:0.298px;left:658.60px;transform-origin:0 50%;transform:scaleX(0.9259);">rw-r--r--</span>
<span class="t" style="top:387.21px;font-size:8.21px;line-height:11px;letter-spacing:0.272px;left:712.20px;transform-origin:0 50%;transform:scaleX(0.9259);">root</span>
<span class="t" style="top:398.74px;font-size:8.21px;line-height:11px;left:451.80px;transform-origin:0 50%;transform:scaleX(0.9259);">ro.pl</span>
<span class="t" style="top:398.74px;font-size:8.21px;line-height:11px;right:186.40px;transform-origin:100% 50%;transform:scaleX(0.9259);">14,006</span>
<span class="t" style="top:398.74px;font-size:8.21px;line-height:11px;letter-spacing:0.139px;left:590.00px;transform-origin:0 50%;transform:scaleX(0.9259);">12/2/2007 12:2...</span>
<span class="t" style="top:398.74px;font-size:8.21px;line-height:11px;letter-spacing:0.298px;left:658.60px;transform-origin:0 50%;transform:scaleX(0.9259);">rw-r--r--</span>
<span class="t" style="top:398.74px;font-size:8.21px;line-height:11px;letter-spacing:0.272px;left:712.20px;transform-origin:0 50%;transform:scaleX(0.9259);">root</span>
<span class="t" style="top:410.27px;font-size:8.21px;line-height:11px;left:451.80px;transform-origin:0 50%;transform:scaleX(0.9259);">ru.pl</span>
<span class="t" style="top:410.27px;font-size:8.21px;line-height:11px;right:186.40px;transform-origin:100% 50%;transform:scaleX(0.9259);">38,152</span>
<span class="t" style="top:410.27px;font-size:8.21px;line-height:11px;letter-spacing:0.139px;left:590.00px;transform-origin:0 50%;transform:scaleX(0.9259);">12/2/2007 12:2...</span>
<span class="t" style="top:410.27px;font-size:8.21px;line-height:11px;letter-spacing:0.298px;left:658.60px;transform-origin:0 50%;transform:scaleX(0.9259);">rw-r--r--</span>
<span class="t" style="top:410.27px;font-size:8.21px;line-height:11px;letter-spacing:0.272px;left:712.20px;transform-origin:0 50%;transform:scaleX(0.9259);">root</span>
<span class="t" style="top:421.80px;font-size:8.21px;line-height:11px;left:451.80px;transform-origin:0 50%;transform:scaleX(0.9259);">sk.pl</span>
<span class="t" style="top:421.80px;font-size:8.21px;line-height:11px;right:186.40px;transform-origin:100% 50%;transform:scaleX(0.9259);">58,263</span>
<span class="t" style="top:421.80px;font-size:8.21px;line-height:11px;letter-spacing:0.139px;left:590.00px;transform-origin:0 50%;transform:scaleX(0.9259);">12/2/2007 12:2...</span>
<span class="t" style="top:421.80px;font-size:8.21px;line-height:11px;letter-spacing:0.298px;left:658.60px;transform-origin:0 50%;transform:scaleX(0.9259);">rw-r--r--</span>
<span class="t" style="top:421.80px;font-size:8.21px;line-height:11px;letter-spacing:0.272px;left:712.20px;transform-origin:0 50%;transform:scaleX(0.9259);">root</span>
<span class="t" style="top:433.33px;font-size:8.21px;line-height:11px;left:451.80px;transform-origin:0 50%;transform:scaleX(0.9259);">sl.pl</span>
<span class="t" style="top:433.33px;font-size:8.21px;line-height:11px;right:186.40px;transform-origin:100% 50%;transform:scaleX(0.9259);">21,603</span>
<span class="t" style="top:433.33px;font-size:8.21px;line-height:11px;letter-spacing:0.139px;left:590.00px;transform-origin:0 50%;transform:scaleX(0.9259);">12/2/2007 12:2...</span>
<span class="t" style="top:433.33px;font-size:8.21px;line-height:11px;letter-spacing:0.298px;left:658.60px;transform-origin:0 50%;transform:scaleX(0.9259);">rw-r--r--</span>
<span class="t" style="top:433.33px;font-size:8.21px;line-height:11px;letter-spacing:0.272px;left:712.20px;transform-origin:0 50%;transform:scaleX(0.9259);">root</span>
<span class="t" style="top:444.86px;font-size:8.21px;line-height:11px;left:451.80px;transform-origin:0 50%;transform:scaleX(0.9259);">so.pl</span>
<span class="t" style="top:444.86px;font-size:8.21px;line-height:11px;right:186.40px;transform-origin:100% 50%;transform:scaleX(0.9259);">32,990</span>
<span class="t" style="top:444.86px;font-size:8.21px;line-height:11px;letter-spacing:0.139px;left:590.00px;transform-origin:0 50%;transform:scaleX(0.9259);">12/2/2007 12:2...</span>
<span class="t" style="top:444.86px;font-size:8.21px;line-height:11px;letter-spacing:0.298px;left:658.60px;transform-origin:0 50%;transform:scaleX(0.9259);">rw-r--r--</span>
<span class="t" style="top:444.86px;font-size:8.21px;line-height:11px;letter-spacing:0.272px;left:712.20px;transform-origin:0 50%;transform:scaleX(0.9259);">root</span>
<span class="t" style="top:456.39px;font-size:8.21px;line-height:11px;left:451.80px;transform-origin:0 50%;transform:scaleX(0.9259);">sq.pl</span>
<span class="t" style="top:456.39px;font-size:8.21px;line-height:11px;right:186.40px;transform-origin:100% 50%;transform:scaleX(0.9259);">71,704</span>
<span class="t" style="top:456.39px;font-size:8.21px;line-height:11px;letter-spacing:0.139px;left:590.00px;transform-origin:0 50%;transform:scaleX(0.9259);">12/2/2007 12:2...</span>
<span class="t" style="top:456.39px;font-size:8.21px;line-height:11px;letter-spacing:0.298px;left:658.60px;transform-origin:0 50%;transform:scaleX(0.9259);">rw-r--r--</span>
<span class="t" style="top:456.39px;font-size:8.21px;line-height:11px;letter-spacing:0.272px;left:712.20px;transform-origin:0 50%;transform:scaleX(0.9259);">root</span>
<span class="t" style="top:194.85px;font-size:11.70px;line-height:15px;letter-spacing:-0.238px;left:114.50px;transform-origin:0 77%;transform:scaleY(1.08);font-weight:700;-webkit-text-stroke:0;color:#111;">kopi countries.pl ke</span>
</div>
</body>
</html>
